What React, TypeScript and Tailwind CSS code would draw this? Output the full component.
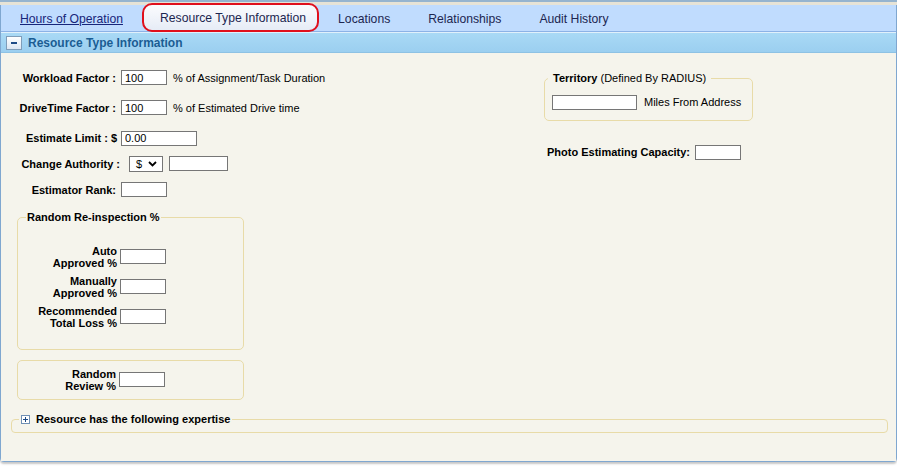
import React from "react";

const tabs = [
  { label: "Hours of Operation", link: true },
  { label: "Resource Type Information", active: true },
  { label: "Locations" },
  { label: "Relationships" },
  { label: "Audit History" },
];

const Box = ({ value = "", w = "w-[46px]" }: { value?: string; w?: string }) => (
  <input
    type="text"
    defaultValue={value}
    className={`${w} h-[15px] border border-[#767676] bg-white px-[3px] text-[11px] leading-[13px] text-black outline-none`}
  />
);

const App: React.FC = () => {
  return (
    <div className="w-[897px] h-[468px] bg-white font-['Liberation_Sans',Arial,sans-serif] overflow-hidden">
      <div className="h-[2px] bg-[#95b4cf]" />
      <div className="h-[3px] bg-[#e6e3d6]" />
      <div className="border-l border-r border-b border-[#7fa7d0] rounded-b-[4px] shadow-[0_2px_2px_#c8c8c8]">
        {/* tabs */}
        <div className="h-[27px] bg-[#c0dcfe] border-b border-[#8cb2e6] flex items-end text-[12.2px] text-[#1c2650]">
          {tabs.map((t) =>
            t.active ? (
              <div
                key={t.label}
                className="h-[29px] -mb-[1px] pl-[16px] pr-[11px] pt-[2px] flex items-center border-2 border-[#e0101c] rounded-[10px] bg-gradient-to-b from-[#fbfcfe] to-[#e6ecf6]"
              >
                {t.label}
              </div>
            ) : (
              <div key={t.label} className="h-[27px] px-[19px] pt-[3px] flex items-center">
                <span className={t.link ? "underline text-[#17257a]" : ""}>{t.label}</span>
              </div>
            )
          )}
        </div>
        {/* section header */}
        <div className="h-[21px] border-t border-[#e0f0fb] border-b border-b-[#8ec2e4] bg-gradient-to-b from-[#a9d9f5] to-[#9bcff0] flex items-center pl-[5px]">
          <div className="w-[16px] h-[14px] border border-[#7f9db9] bg-gradient-to-b from-white to-[#dbe6f3] flex items-center justify-center">
            <div className="w-[6px] h-[2px] bg-[#1d4a86]" />
          </div>
          <span className="ml-[6px] text-[12px] font-bold text-[#1b5d93]">Resource Type Information</span>
        </div>
        {/* content */}
        <div className="bg-[#f5f4ec] h-[408px] pl-[10px] pr-[8px] text-[11px] text-black">
          <div className="flex">
            {/* left column */}
            <div className="w-[533px] pt-[10px]">
              <div className="h-[30px] flex items-center">
                <span className="w-[105px] text-right font-bold whitespace-nowrap">Workload Factor :</span>
                <span className="ml-[5px]"><Box value="100" /></span>
                <span className="ml-[6px]">% of Assignment/Task Duration</span>
              </div>
              <div className="h-[30px] flex items-center">
                <span className="w-[105px] text-right font-bold whitespace-nowrap">DriveTime Factor :</span>
                <span className="ml-[5px]"><Box value="100" /></span>
                <span className="ml-[6px]">% of Estimated Drive time</span>
              </div>
              <div className="h-[29px] pt-[2px] flex items-center">
                <span className="w-[106px] text-right font-bold whitespace-nowrap">Estimate Limit : $</span>
                <span className="ml-[4px]"><Box value="0.00" w="w-[76px]" /></span>
              </div>
              <div className="h-[24px] flex items-center">
                <span className="w-[109px] text-right font-bold whitespace-nowrap">Change Authority :</span>
                <div className="ml-[9px] w-[34px] h-[16px] border border-[#767676] bg-white flex items-center pl-[6px] gap-[6px]">
                  <span className="text-[11px]">$</span>
                  <svg width="9" height="6" viewBox="0 0 9 6">
                    <path d="M1 1 L4.5 4.5 L8 1" fill="none" stroke="#000" strokeWidth="1.8" />
                  </svg>
                </div>
                <span className="ml-[6px]"><Box w="w-[59px]" /></span>
              </div>
              <div className="h-[28px] flex items-center">
                <span className="w-[105px] text-right font-bold whitespace-nowrap">Estimator Rank:</span>
                <span className="ml-[5px]"><Box /></span>
              </div>

              <fieldset className="mt-[7px] ml-[6px] w-[227px] h-[139px] border border-[#e8dba8] rounded-[5px]">
                <legend className="ml-[8px] px-[1px] font-bold leading-[13px]">Random Re-inspection %</legend>
                <div className="mt-[21px] flex flex-col gap-[6px]">
                  {[
                    ["Auto", "Approved %"],
                    ["Manually", "Approved %"],
                    ["Recommended", "Total Loss %"],
                  ].map(([a, b]) => (
                    <div key={a} className="h-[24px] flex items-center">
                      <div className="w-[99px] text-right font-bold leading-[12px]">
                        {a}
                        <br />
                        {b}
                      </div>
                      <span className="ml-[3px]"><Box /></span>
                    </div>
                  ))}
                </div>
              </fieldset>

              <div className="mt-[10px] ml-[6px] w-[227px] h-[40px] border border-[#e8dba8] rounded-[5px] flex items-center">
                <div className="w-[98px] text-right font-bold leading-[12px]">
                  Random
                  <br />
                  Review %
                </div>
                <span className="ml-[3px]"><Box /></span>
              </div>
            </div>

            {/* right column */}
            <div className="pt-[19px]">
              <fieldset className="w-[209px] h-[49px] border border-[#e8dba8] rounded-[5px] px-[3px]">
                <legend className="px-[5px] leading-[13px]">
                  <span className="font-bold">Territory</span> (Defined By RADIUS)
                </legend>
                <div className="flex items-center mt-[9px] pl-[4px]">
                  <Box w="w-[85px]" />
                  <span className="ml-[7px]">Miles From Address</span>
                </div>
              </fieldset>
              <div className="mt-[23px] ml-[3px] flex items-center">
                <span className="font-bold">Photo Estimating Capacity:</span>
                <span className="ml-[5px]"><Box /></span>
              </div>
            </div>
          </div>

          <fieldset className="mt-[13px] w-[877px] h-[20px] border border-[#e8dba8] rounded-[4px]">
            <legend className="ml-[7px] px-[2px] flex items-center leading-[13px]">
              <span className="w-[9px] h-[9px] border border-[#6f8fb4] bg-white flex items-center justify-center relative">
                <span className="absolute w-[5px] h-[1px] bg-[#1d4a86]" />
                <span className="absolute w-[1px] h-[5px] bg-[#1d4a86]" />
              </span>
              <span className="ml-[6px] font-bold">Resource has the following expertise</span>
            </legend>
          </fieldset>
        </div>
      </div>
    </div>
  );
};

export default App;
